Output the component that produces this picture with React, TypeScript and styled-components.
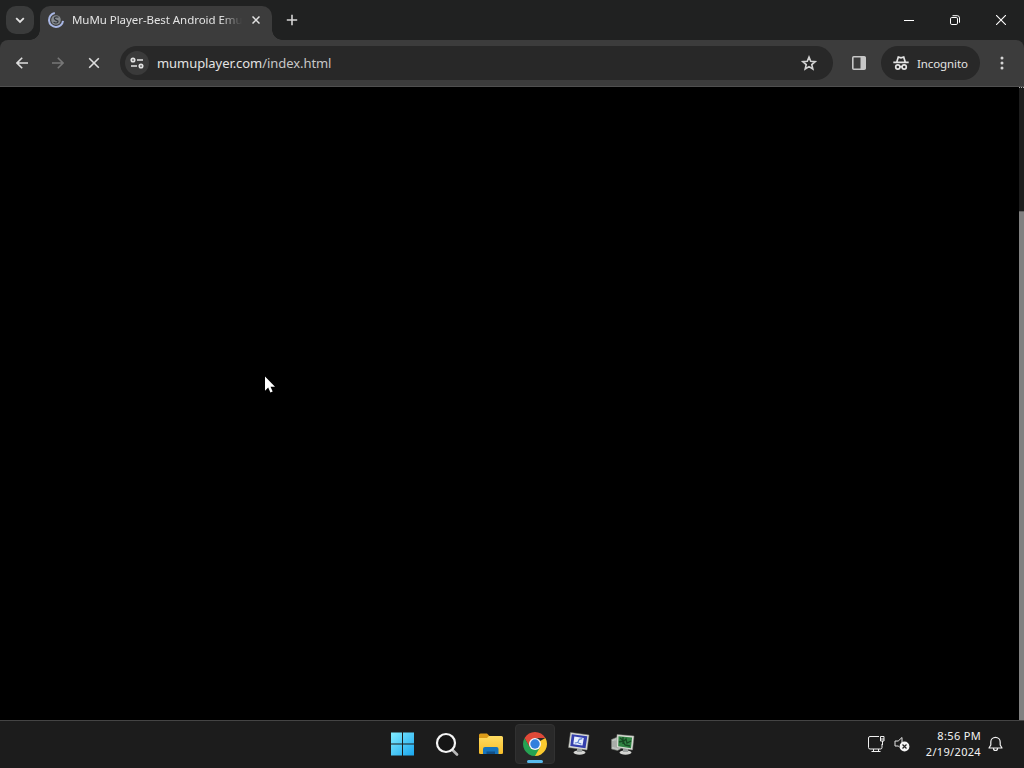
import React from 'react';
import styled, { createGlobalStyle } from 'styled-components';

const GlobalStyle = createGlobalStyle`
  * { box-sizing: border-box; }
  html, body { margin: 0; padding: 0; background: #000; overflow: hidden; }
  svg { display: block; flex: none; }
`;

const Desktop = styled.div`
  width: 1024px;
  height: 768px;
  display: flex;
  flex-direction: column;
  background: #000;
  color: #e3e3e3;
  font-family: 'Noto Sans', 'Open Sans', sans-serif;
  overflow: hidden;
`;

const TabStrip = styled.div`
  height: 40px;
  display: flex;
  align-items: flex-start;
  padding: 6px 0 0 6px;
  background: #202121;
`;

const TabSearch = styled.div`
  width: 28px;
  height: 28px;
  border-radius: 10px;
  background: #3a3b3b;
  display: grid;
  place-items: center;
  margin-right: 6px;
`;

const Tab = styled.div`
  position: relative;
  width: 232px;
  height: 34px;
  display: flex;
  align-items: center;
  padding: 0 8px 6px;
  border-radius: 10px 10px 0 0;
  background: #3c3c3c;
  &::before,
  &::after {
    content: '';
    position: absolute;
    bottom: 0;
    width: 10px;
    height: 10px;
  }
  &::before {
    left: -10px;
    background: radial-gradient(circle at 0 0, transparent 9.5px, #3c3c3c 10px);
  }
  &::after {
    right: -10px;
    background: radial-gradient(circle at 100% 0, transparent 9.5px, #3c3c3c 10px);
  }
`;

const TabTitle = styled.span`
  width: 170px;
  margin-left: 8px;
  white-space: nowrap;
  font-size: 11.5px;
  line-height: 18px;
  letter-spacing: -0.06px;
  mask-image: linear-gradient(to right, #000 148px, transparent 170px);
`;

const TabClose = styled.div`
  margin-left: 6px;
  width: 16px;
  height: 16px;
  display: grid;
  place-items: center;
`;

const NewTab = styled.div`
  width: 28px;
  height: 28px;
  margin-left: 6px;
  display: grid;
  place-items: center;
`;

const WindowControls = styled.div`
  display: flex;
  margin-left: auto;
`;

const WindowButton = styled.div`
  width: 46px;
  height: 28px;
  display: grid;
  place-items: center;
`;

const ToolbarBack = styled.div`
  background: #202121;
`;

const Toolbar = styled.div`
  height: 47px;
  display: flex;
  align-items: center;
  padding: 0 0 0 4px;
  border-radius: 8px 8px 0 0;
  border-bottom: 1px solid #505050;
  background: #3c3c3c;
`;

const ToolButton = styled.div<{ $w?: number }>`
  flex: none;
  width: ${(p) => p.$w ?? 36}px;
  height: 34px;
  display: grid;
  place-items: center;
`;

const AddressBar = styled.div`
  flex: none;
  width: 713px;
  height: 34px;
  margin: 0 4px 0 8px;
  display: flex;
  align-items: center;
  padding: 0 15px 0 5px;
  border-radius: 17px;
  background: #282828;
`;

const SiteInfo = styled.div`
  width: 24px;
  height: 24px;
  border-radius: 50%;
  background: #3a3a3a;
  display: grid;
  place-items: center;
`;

const Url = styled.span`
  flex: 1;
  margin-left: 8px;
  font-size: 13px;
  line-height: 20px;
  letter-spacing: -0.06px;
  white-space: nowrap;
  em { font-style: normal; color: #c7c7c7; }
`;

const Incognito = styled.div`
  flex: none;
  width: 99px;
  height: 34px;
  display: flex;
  align-items: center;
  gap: 8px;
  padding-left: 12px;
  border-radius: 17px;
  background: #282828;
  font-size: 11.5px;
  letter-spacing: -0.1px;
`;

const Page = styled.main`
  position: relative;
  height: 633px;
  display: flex;
  justify-content: flex-end;
  background: #000;
`;

const ScrollTrack = styled.div`
  width: 5px;
  background: #1d1d1d;
  border-top: 1px dotted #aaa;
  padding-top: 123px;
`;

const ScrollThumb = styled.div`
  height: 100%;
  background: #808080;
  border-top: 1px solid #606060;
`;

const Cursor = styled.svg`
  position: absolute;
  left: 264px;
  top: 289px;
`;

const Taskbar = styled.footer`
  height: 48px;
  display: grid;
  grid-template-columns: 1fr auto 1fr;
  padding-bottom: 2px;
  border-top: 1px solid #444;
  background: #1c1c1c;
`;

const AppIcons = styled.div`
  grid-column: 2;
  display: flex;
  align-items: center;
  padding-left: 2px;
`;

const AppButton = styled.div<{ $active?: boolean }>`
  position: relative;
  width: 40px;
  height: 40px;
  margin: 0 2px;
  display: grid;
  place-items: center;
  border-radius: 4px;
  border: 1px solid ${(p) => (p.$active ? '#313131' : 'transparent')};
  background: ${(p) => (p.$active ? '#292929' : 'transparent')};
  &::after {
    content: '';
    display: ${(p) => (p.$active ? 'block' : 'none')};
    position: absolute;
    bottom: 0;
    left: 11px;
    width: 16px;
    height: 3px;
    border-radius: 2px;
    background: #58bbed;
  }
`;

const Tray = styled.div`
  display: flex;
  align-items: center;
  justify-content: flex-end;
  padding-right: 21px;
`;

const Clock = styled.div`
  width: 60px;
  margin: 0 7px 0 11px;
  text-align: right;
  font-size: 11px;
  letter-spacing: 0.33px;
  line-height: 16px;
  color: #f3f3f3;
  white-space: nowrap;
`;

const TrayIcon = styled.div`
  margin-right: 9px;
  &:nth-child(2) { margin-right: 0; }
`;

const Bell = styled.div`
  width: 15px;
`;

function Monitor({ screen, tower }: { screen: string; tower?: boolean }) {
  return (
    <svg width="24" height="24" viewBox="0 0 24 24">
      {tower && <path d="M.5 7.5l6-2.500 3 1v11l-3 1.500-6-1.500z" fill="#bfc3bf" stroke="#70756f" strokeWidth=".6" />}
      {tower && <path d="M2 9v6M4 8.500v7" stroke="#858b86" strokeWidth=".8" />}
      <ellipse cx={tower ? 14.5 : 12.5} cy="20.5" rx="6" ry="2.2" fill="#d4d5d2" />
      <path d={tower ? 'M12 16h5v4h-5z' : 'M10 16h5v4h-5z'} fill="#9da1a0" />
      <path d={tower ? 'M6 2.5L23 4l-1.5 14L5.5 15.500z' : 'M3.500 .5l18.500 2.500L20 18 1.500 15.500z'} fill="#dddfd8" stroke="#80857f" strokeWidth=".5" />
      <path d={tower ? 'M7.500 4.200l13.600 1.200L20 16.200 7.200 14.200z' : 'M4.800 2.200l15.500 2.100L18.500 16.200 3.300 14z'} fill={screen} />
      {tower ? (
        <path d="M9 6l4 3 2-2 1 4 4-2M8 10l4-1 2 4 5 1M12 5v7" fill="none" stroke="#174822" strokeWidth="1.3" />
      ) : (
        <>
          <path d="M7.300 4.600l9.500 1.400L15.500 13.600 6.300 12.200z" fill="#e8f0ff" />
          <path d="M7.800 11l3-.5 1.500-3.200 3-.6M11.300 11l3 1" fill="none" stroke="#597fcf" strokeWidth="1.2" />
        </>
      )}
    </svg>
  );
}

export default function App() {
  return (
    <>
      <GlobalStyle />
      <Desktop>
        <TabStrip>
          <TabSearch>
            <svg width="10" height="10" viewBox="0 0 10 10" fill="none" stroke="#e3e3e3" strokeWidth="1.8"><path d="M1.200 3.200L5 7l3.800-3.800" /></svg>
          </TabSearch>
          <Tab>
            <svg width="16" height="16" viewBox="0 0 16 16" fill="none">
              <circle cx="8" cy="8" r="4.800" fill="#85898e" />
              <path d="M10.500 5.200C7.500 4 5.300 6 7 7.500s3.500 1 3 2.400-3 1.400-4.500.2" stroke="#30343a" strokeWidth="1.200" />
              <path d="M6.800 1.100A7 7 0 1 0 15 8.800" stroke="#a9b7e4" strokeWidth="2" />
            </svg>
            <TabTitle>MuMu Player-Best Android Emu</TabTitle>
            <TabClose>
              <svg width="8" height="8" viewBox="0 0 8 8" stroke="#e3e3e3" strokeWidth="1.5"><path d="M.5.5l7 7m0-7l-7 7" /></svg>
            </TabClose>
          </Tab>
          <NewTab>
            <svg width="12" height="12" viewBox="0 0 12 12" stroke="#d5d5d5" strokeWidth="1.6"><path d="M6 .8v10.400M.8 6h10.400" /></svg>
          </NewTab>
          <WindowControls>
            <WindowButton><svg width="10" height="10" viewBox="0 0 10 10" stroke="#fff"><path d="M0 5.500h10" /></svg></WindowButton>
            <WindowButton>
              <svg width="10" height="10" viewBox="0 0 10 10" fill="none" stroke="#fff"><rect x=".5" y="2.500" width="7" height="7" rx="1.300" /><path d="M2.500.7h4.800a2.200 2.200 0 0 1 2.200 2.200v4.800" /></svg>
            </WindowButton>
            <WindowButton><svg width="10" height="10" viewBox="0 0 10 10" stroke="#fff" strokeWidth="1.100"><path d="M0 0l10 10M10 0L0 10" /></svg></WindowButton>
          </WindowControls>
        </TabStrip>
        <ToolbarBack>
          <Toolbar>
            <ToolButton><svg width="12" height="12" viewBox="0 0 12 12" fill="none" stroke="#dedede" strokeWidth="1.600"><path d="M12 6H1.300M6.200.8L1 6l5.200 5.200" /></svg></ToolButton>
            <ToolButton><svg width="12" height="12" viewBox="0 0 12 12" fill="none" stroke="#777" strokeWidth="1.600"><path d="M0 6h10.700M5.800.8L11 6l-5.200 5.200" /></svg></ToolButton>
            <ToolButton><svg width="12" height="12" viewBox="0 0 12 12" stroke="#dedede" strokeWidth="1.600"><path d="M1.200 1.200l9.600 9.600m0-9.600l-9.600 9.600" /></svg></ToolButton>
            <AddressBar>
              <SiteInfo>
                <svg width="14" height="12" viewBox="0 0 14 12" fill="none" stroke="#e3e3e3" strokeWidth="1.700"><circle cx="3" cy="3" r="1.700" /><path d="M7 3h6M1 9h6" /><circle cx="11" cy="9" r="1.700" /></svg>
              </SiteInfo>
              <Url>mumuplayer.com<em>/index.html</em></Url>
              <svg width="18" height="18" viewBox="0 0 24 24" fill="none" stroke="#d2d2d2" strokeWidth="2.200"><path d="M12 4.200l2.300 5.500 5.900.5-4.500 3.900 1.400 5.800-5.100-3.100-5.100 3.100 1.400-5.800-4.500-3.900 5.900-.5z" /></svg>
            </AddressBar>
            <ToolButton $w={44}>
              <svg width="14" height="14" viewBox="0 0 14 14"><rect x=".8" y=".8" width="12.400" height="12.400" rx="1" fill="none" stroke="#c7c7c7" strokeWidth="1.600" /><path d="M8.500 1h5v12h-5z" fill="#c7c7c7" /></svg>
            </ToolButton>
            <Incognito>
              <svg width="16" height="16" viewBox="0 0 16 16" fill="none" stroke="#e3e3e3" strokeWidth="1.700"><path d="M.3 7.400h15.400M3.700 7.200L5.300 2l2.700.8L10.700 2l1.600 5.200" /><circle cx="4.800" cy="12" r="2.100" /><circle cx="11.200" cy="12" r="2.100" /><path d="M6.800 11.700h2.400" /></svg>
              Incognito
            </Incognito>
            <ToolButton $w={44}>
              <svg width="4" height="14" viewBox="0 0 4 14" fill="#d5d5d5"><circle cx="2" cy="2" r="1.500" /><circle cx="2" cy="7" r="1.500" /><circle cx="2" cy="12" r="1.500" /></svg>
            </ToolButton>
          </Toolbar>
        </ToolbarBack>
        <Page>
          <ScrollTrack><ScrollThumb /></ScrollTrack>
          <Cursor width="12" height="19" viewBox="0 0 12 19" fill="#fff"><path d="M1 .5v14.200l3.200-3.100 2.200 5 2.300-1-2.200-4.800H11z" /></Cursor>
        </Page>
        <Taskbar>
          <AppIcons>
            <AppButton>
              <svg width="24" height="24" viewBox="0 0 24 24">
                <defs><linearGradient id="win" x1="0" y1="0" x2="24" y2="24" gradientUnits="userSpaceOnUse"><stop stopColor="#83edff" /><stop offset="1" stopColor="#16a4ee" /></linearGradient></defs>
                <path d="M0 .5h11V11.500H0zM12 .5h11V11.500H12zM0 12.500h11V23.500H0zM12 12.500h11V23.500H12z" fill="url(#win)" />
              </svg>
            </AppButton>
            <AppButton>
              <svg width="24" height="24" viewBox="0 0 24 24" fill="none"><path d="M17 17.500l5 5" stroke="#b9b9b9" strokeWidth="2.600" strokeLinecap="round" /><circle cx="11" cy="11" r="9" fill="#151515" stroke="#f5f5f5" strokeWidth="2.200" /></svg>
            </AppButton>
            <AppButton>
              <svg width="24" height="24" viewBox="0 0 24 24">
                <defs><linearGradient id="folder" x1="0" y1="0" x2="0" y2="1"><stop stopColor="#ffdc62" /><stop offset="1" stopColor="#f7bd28" /></linearGradient></defs>
                <path d="M0 3q0-1.500 1.500-1.500H8L10.500 4v4H0z" fill="#dc9b18" />
                <path d="M0 6h8l2-2h12.500Q24 4 24 5.500V21q0 1-1.500 1H1.500Q0 22 0 21z" fill="url(#folder)" />
                <path d="M4 22v-5q0-2 2-2h11.500q2 0 2 2v5z" fill="#1674bd" /><path d="M7.500 22v-2.500h8.500V22z" fill="#114f87" />
              </svg>
            </AppButton>
            <AppButton $active>
              <svg width="24" height="24" viewBox="0 0 24 24">
                <path d="M12 12L22.390 6A12 12 0 0 1 12 24z" fill="#fccb2f" />
                <path d="M1.610 6A12 12 0 0 0 12 24l5.200-9-5.200 3-5.200-3z" fill="#26a253" />
                <path d="M1.610 6A12 12 0 0 1 22.390 6H12L6.800 15z" fill="#df4938" />
                <circle cx="12" cy="12" r="6" fill="#f6f7fb" /><circle cx="12" cy="12" r="4.700" fill="#317fdd" />
              </svg>
            </AppButton>
            <AppButton><Monitor screen="#343fac" /></AppButton>
            <AppButton><Monitor screen="#308443" tower /></AppButton>
          </AppIcons>
          <Tray>
            <TrayIcon>
              <svg width="17" height="17" viewBox="0 0 17 17" fill="none" stroke="#f0f0f0"><path d="M11 1.500H2Q.5 1.500.5 3v9.500Q.5 14 2 14h10.500q1.500 0 1.500-1.500V9M5.500 14v2.500m5-2.500v2.500M3.500 16.500h9" /><path d="M12.500 1.500h3.500v4.500h-3.500zM12.500 4h3.500M14.500 6V10" /></svg>
            </TrayIcon>
            <TrayIcon>
              <svg width="16" height="16" viewBox="0 0 16 16" fill="none" stroke="#e5e5e5"><path d="M8 7V1.500L4.200 5H1v5h3.200l1.300 1.200" /><circle cx="10.500" cy="10.500" r="4.900" fill="#f4f4f4" stroke="none" /><path d="M8.500 8.500l4 4m0-4l-4 4" stroke="#222" strokeWidth="1.200" /></svg>
            </TrayIcon>
            <Clock>8:56 PM<br />2/19/2024</Clock>
            <Bell><svg width="15" height="16" viewBox="0 0 15 16" fill="none" stroke="#f0f0f0" strokeWidth="1.200"><path d="M1 12h13l-1.800-3V6a4.700 4.700 0 0 0-9.400 0v3zM5.500 12.500a2 2 0 0 0 4 0" strokeLinejoin="round" /></svg></Bell>
          </Tray>
        </Taskbar>
      </Desktop>
    </>
  );
}
